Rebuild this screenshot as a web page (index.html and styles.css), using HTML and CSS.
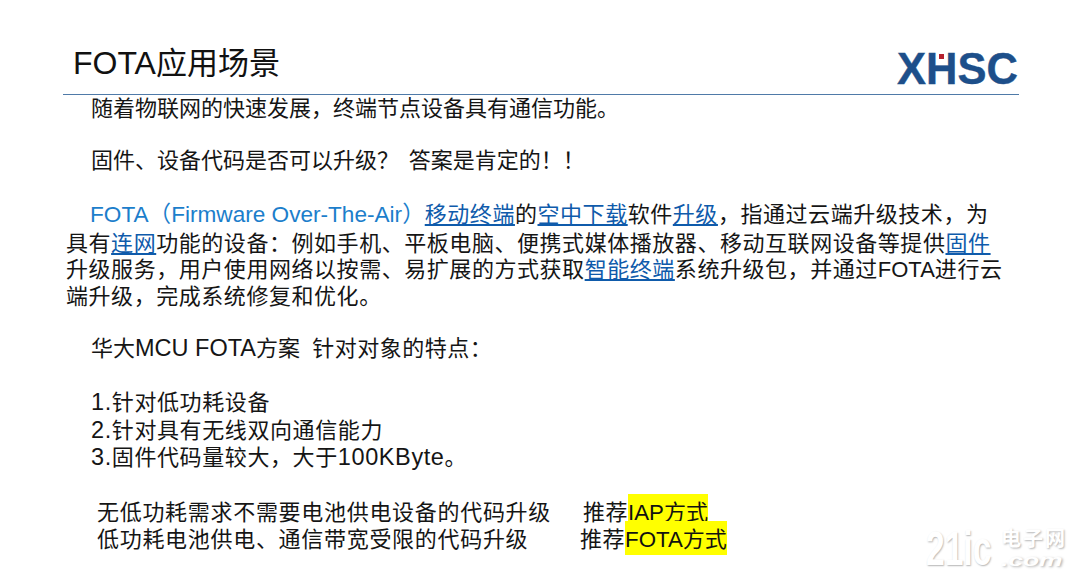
FILE: index.html
```html
<!DOCTYPE html>
<html lang="zh">
<head>
<meta charset="utf-8">
<title>FOTA应用场景</title>
<link rel="stylesheet" href="styles.css">
</head>
<body>
<main class="slide">
  <header class="head">
    <h1 class="title"><span class="title-en">FOTA</span>应用场景</h1>
    <div class="logo"><span class="logo-text">XHSC</span><i class="logo-dot"></i></div>
  </header>
  <section class="body">
    <p class="line ind">随着物联网的快速发展，终端节点设备具有通信功能。</p>
    <p class="line ind gap-b">固件、设备代码是否可以升级？&#8198; 答案是肯定的！！</p>
    <div class="para gap-d">
      <p class="line wide first"><span class="blue en">FOTA（Firmware Over-The-Air）</span><a class="lk">移动终端</a>的<a class="lk">空中下载</a>软件<a class="lk">升级</a>，指通过云端升级技术，为</p>
      <p class="line wide second">具有<a class="lk">连网</a>功能的设备：例如手机、平板电脑、便携式媒体播放器、移动互联网设备等提供<a class="lk">固件</a></p>
      <p class="line wide">升级服务，用户使用网络以按需、易扩展的方式获取<a class="lk">智能终端</a>系统升级包，并通过<span class="en-t">FOTA</span>进行云</p>
      <p class="line wide">端升级，完成系统修复和优化。</p>
    </div>
    <p class="line ind gap-b">华大<span class="en-l">MCU FOTA</span>方案&nbsp; <span class="tail">针对对象的特点：</span></p>
    <div class="list gap-e">
      <p class="line ind"><span class="en-l">1.</span>针对低功耗设备</p>
      <p class="line ind"><span class="en-l">2.</span>针对具有无线双向通信能力</p>
      <p class="line ind"><span class="en-l">3.</span>固件代码量较大，大于<span class="en-l">100KByte</span>。</p>
    </div>
    <div class="rec gap-f">
      <div class="rec-row"><p class="line r1">无低功耗需求不需要电池供电设备的代码升级</p><p class="line r2"><span>推荐</span><mark class="hl"><span class="en-h">IAP</span>方式</mark></p></div>
      <div class="rec-row"><p class="line r1">低功耗电池供电、通信带宽受限的代码升级</p><p class="line r3"><span>推荐</span><mark class="hl"><span class="en-h">FOTA</span>方式</mark></p></div>
    </div>
  </section>
  <div class="mark"><span class="mark-num">21ic</span><span class="mark-side"><span class="mark-cn">电子网</span><span class="mark-com">.com</span></span></div>
</main>
</body>
</html>
```

FILE: styles.css
```css
* { box-sizing: border-box; }
html, body { margin: 0; background: #fff; }
body {
  width: 1080px;
  height: 573px;
  overflow: hidden;
  font-family: "Liberation Sans", "Noto Sans CJK SC", sans-serif;
  color: #151515;
}
.slide { position: relative; width: 1080px; height: 573px; padding: 0 61px 0 63px; }
.head {
  position: relative;
  height: 95px;
  border-bottom: 1px solid #4f7aa8;
}
.title {
  margin: 0;
  padding: 43px 0 0 10px;
  font-size: 31px;
  line-height: 40px;
  font-weight: 400;
  color: #111;
}
.title-en { font-size: 32px; }
.logo { position: absolute; right: 2px; top: 47px; width: 120px; height: 44px; }
.logo-text {
  font-size: 43.5px;
  line-height: 44px;
  font-weight: 700;
  color: #1d4f8a;
  -webkit-text-stroke: 0.4px #1d4f8a;
}
.logo-dot { position: absolute; left: 42px; top: 7px; width: 5px; height: 5px; background: #b5202e; }
.body { padding-left: 3px; }
.line {
  margin: 0;
  font-size: 22px;
  line-height: 27px;
  white-space: nowrap;
}
.en { font-size: 22.6px; }
.en-t { font-size: 22px; letter-spacing: 0; }
.en-l { font-size: 23.5px; }
.en-h { font-size: 22.3px; }
.tail { letter-spacing: 0.5px; }
.ind { padding-left: 25px; }
.gap-b { margin-top: 25px; }
.gap-d { margin-top: 27px; }
.gap-e { margin-top: 27px; }
.gap-f { margin-top: 27px; }
.wide { letter-spacing: 0.55px; }
.first { padding-left: 24px; }
.second { margin-top: 2px; margin-bottom: -1px; }
.blue { color: #1c7ecb; letter-spacing: 0; }
.lk { color: #0f5bab; text-decoration: underline; }
.list .line { letter-spacing: 0.6px; line-height: 27.5px; }
.rec-row { display: flex; padding-left: 31px; letter-spacing: 0.7px; }
.r1 { width: 486px; }
.r2, .r3 { letter-spacing: 0.5px; }
.r3 { margin-left: -3px; }
.hl { background: #ffff00; color: #111; letter-spacing: 0; padding: 6px 0 3px; }
.mark {
  position: absolute;
  left: 926px;
  top: 527px;
  display: flex;
  align-items: center;
  gap: 9px;
  color: #fff;
  text-shadow: 1px 1px 2px #b5b5b5;
  font-weight: 700;
}
.mark-num {
  display: block;
  width: 66px;
  font-size: 48px;
  line-height: 44px;
  transform: scaleX(0.7);
  transform-origin: left center;
}
.mark-side { display: flex; flex-direction: column; gap: 0; }
.mark-cn { font-size: 20px; line-height: 23px; letter-spacing: 2px; }
.mark-com {
  font-size: 17px;
  line-height: 20px;
  font-style: italic;
  transform: scaleX(1.55);
  transform-origin: left center;
}
```
